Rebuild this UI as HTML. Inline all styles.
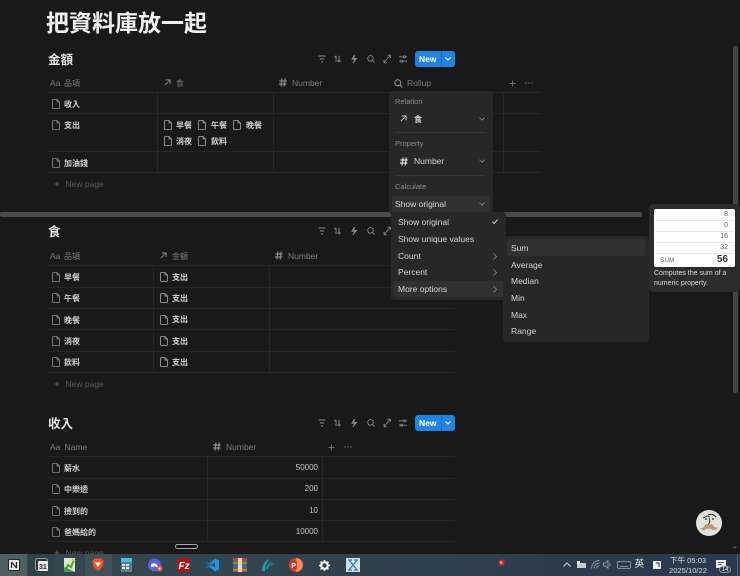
<!DOCTYPE html>
<html lang="zh-Hant"><head><meta charset="utf-8"><title>把資料庫放一起</title>
<style>
html,body{margin:0;padding:0;background:#191919}
#p{position:relative;width:740px;height:576px;overflow:hidden;background:#191919;font-family:"Liberation Sans","Noto Sans CJK TC",sans-serif;color:#d4d4d4;filter:blur(.3px)}
.t{position:absolute;white-space:nowrap;line-height:12px;font-size:8px}
.h{color:#7c7c7c;font-size:8px}
.c{margin-top:1px}
.r{color:#d0d0d0;font-weight:700;font-size:8px;margin-top:1px}
.n{color:#c4c4c4;font-size:8px;text-align:right}
.np{color:#5a5a5a;font-size:8.5px}
.m{color:#d6d6d6;font-size:8.5px}
.l{color:#8c8c8c;font-size:7.5px}
.hl{position:absolute;height:1px;background:#262626}
.vl{position:absolute;width:1px;background:#262626}
.b{position:absolute}
svg{position:absolute;overflow:visible;fill:none}
.btn{position:absolute;width:40px;height:16px;background:#2383e2;border-radius:3px}
.btn i{position:absolute;left:26px;top:0;width:1px;height:16px;background:#1a6cc0}
.btn span{position:absolute;left:4px;top:2px;line-height:12px;font-size:8.5px;font-weight:700;color:#fff}
</style></head><body><div id="p">
<svg width="0" height="0" style="position:absolute"><defs>
<symbol id="doc" viewBox="0 0 8 10" overflow="visible"><path d="M.5 1.2Q.5.5 1.2.5H5L7.5 3V8.8Q7.5 9.5 6.8 9.5H1.2Q.5 9.5.5 8.8ZM5 .5V3H7.5" stroke="#8d8d8d" stroke-width=".8" fill="none"/></symbol>
<symbol id="docw" viewBox="0 0 8 10" overflow="visible"><path d="M.5 1.2Q.5.5 1.2.5H5L7.5 3V8.8Q7.5 9.5 6.8 9.5H1.2Q.5 9.5.5 8.8ZM5 .5V3H7.5" stroke="#a8a8a8" stroke-width=".8" fill="none"/></symbol>
<symbol id="arr" viewBox="0 0 8 8" overflow="visible"><path d="M1 7 7 1M2 1H7V6" stroke="currentColor" stroke-width="1" fill="none"/></symbol>
<symbol id="hash" viewBox="0 0 8 9" overflow="visible"><path d="M3 .5 2 8.5M6.2.5 5.2 8.5M.3 3H7.7M0 6H7.4" stroke="currentColor" stroke-width="1.2" fill="none"/></symbol>
<symbol id="chev" viewBox="0 0 6 4" overflow="visible"><path d="M.5.7 3 3.2 5.5.7" stroke="#8a8a8a" stroke-width=".8" fill="none"/></symbol>
<symbol id="right" viewBox="0 0 4 7" overflow="visible"><path d="M.5.5 3.5 3.5.5 6.5" stroke="#8a8a8a" stroke-width=".8" fill="none"/></symbol>
<symbol id="plus" viewBox="0 0 7 7" overflow="visible"><path d="M3.5.5V6.5M.5 3.5H6.5" stroke="#6c6c6c" stroke-width="1" fill="none"/></symbol>
<symbol id="dots" viewBox="0 0 8 2" overflow="visible"><circle cx="1" cy="1" r=".7" fill="#727272"/><circle cx="4" cy="1" r=".7" fill="#727272"/><circle cx="7" cy="1" r=".7" fill="#727272"/></symbol>
<symbol id="tools" viewBox="0 0 90 10" overflow="visible">
<g stroke="#8a8a8a" stroke-width=".9" fill="none">
<path d="M.5 2H7.5M1.8 5H6.2M3 8H5"/>
<path d="M18 8V1.8M16.400 3.400 18 1.800M21 1.800V8M19.400 6.400 21 8M21 8 22.600 6.400"/>
<path d="M36.500 1 34 5.300H37L35 9 38.500 4.400H35.800Z"/>
<circle cx="52.500" cy="4.400" r="2.800"/><path d="M54.500 6.500 56.700 8.800"/>
<path d="M66 8.500 72 1.500M69.400 1.200H72.300V4M66 6V8.800H68.900"/>
<path d="M81 2.800H89M81 7.200H89"/><circle cx="86.400" cy="2.800" r="1" fill="#191919"/><circle cx="83.600" cy="7.200" r="1" fill="#191919"/>
</g></symbol>
</defs></svg>

<div class="t" style="left:46px;top:8px;font-size:23px;line-height:30px;font-weight:700;color:#f0f0f0">把資料庫放一起</div>

<!-- Table 1 -->
<div class="t" style="left:48px;top:52px;font-size:12.5px;line-height:16px;font-weight:700;color:#e6e6e6">金額</div>
<svg style="left:318px;top:54px" width="90" height="10"><use href="#tools" width="90" height="10"/></svg>
<div class="btn" style="left:415px;top:51px"><span>New</span><i></i><svg style="left:30px;top:6px" width="6" height="4"><path d="M.5.5 3 3 5.5.5" stroke="#fff" stroke-width="1"/></svg></div>

<div class="t h" style="left:50px;top:77px;font-size:8.5px">Aa</div><div class="t h c" style="left:64px;top:77px">品項</div>
<svg style="left:164px;top:79px;color:#909090" width="7" height="7"><use href="#arr" width="7" height="7"/></svg><div class="t h c" style="left:176px;top:77px">食</div>
<svg style="left:279px;top:78px;color:#8a8a8a" width="8" height="9"><use href="#hash" width="8" height="9"/></svg><div class="t h" style="left:292px;top:77px;font-size:8.5px">Number</div>
<svg style="left:394px;top:79px" width="9" height="9"><circle cx="3.8" cy="3.8" r="3" stroke="#a0a0a0"/><path d="M6 6 8.5 8.5" stroke="#a0a0a0"/></svg><div class="t h" style="left:407px;top:77px;font-size:8.5px">Rollup</div>
<svg style="left:509px;top:79.5px" width="7" height="7"><use href="#plus" width="7" height="7"/></svg>
<svg style="left:524.500px;top:82px" width="8" height="2"><use href="#dots" width="8" height="2"/></svg>

<div class="hl" style="left:48px;top:92px;width:493px"></div>
<div class="hl" style="left:48px;top:113px;width:493px"></div>
<div class="hl" style="left:48px;top:151px;width:493px"></div>
<div class="hl" style="left:48px;top:172px;width:493px"></div>
<div class="vl" style="left:157px;top:93px;height:79px"></div>
<div class="vl" style="left:273px;top:93px;height:79px"></div>
<div class="vl" style="left:503px;top:93px;height:79px"></div>

<svg style="left:52px;top:99px" width="8" height="10"><use href="#doc" width="8" height="10"/></svg><div class="t r" style="left:64px;top:98px">收入</div>
<svg style="left:52px;top:120px" width="8" height="10"><use href="#doc" width="8" height="10"/></svg><div class="t r" style="left:64px;top:119px">支出</div>
<svg style="left:52px;top:158px" width="8" height="10"><use href="#doc" width="8" height="10"/></svg><div class="t r" style="left:64px;top:157px">加油錢</div>

<svg style="left:164px;top:120px" width="8" height="10"><use href="#docw" width="8" height="10"/></svg><div class="t r" style="left:176px;top:119px">早餐</div>
<svg style="left:198px;top:120px" width="8" height="10"><use href="#docw" width="8" height="10"/></svg><div class="t r" style="left:211px;top:119px">午餐</div>
<svg style="left:233px;top:120px" width="8" height="10"><use href="#docw" width="8" height="10"/></svg><div class="t r" style="left:246px;top:119px">晚餐</div>
<svg style="left:164px;top:136px" width="8" height="10"><use href="#docw" width="8" height="10"/></svg><div class="t r" style="left:176px;top:135px">消夜</div>
<svg style="left:198px;top:136px" width="8" height="10"><use href="#docw" width="8" height="10"/></svg><div class="t r" style="left:211px;top:135px">飲料</div>

<svg style="left:54px;top:181px" width="6" height="6"><use href="#plus" width="6" height="6"/></svg><div class="t np" style="left:65.5px;top:178px">New page</div>

<!-- scrollbars -->
<div class="b" style="left:0;top:212px;width:642px;height:5px;background:#4b4b4b;border-radius:2px"></div>
<div class="b" style="left:733px;top:46px;width:5px;height:347px;background:#444;border-radius:2px"></div>
<svg style="left:732px;top:546px" width="6" height="4"><path d="M.5.5 3 3 5.5.5Z" fill="#555"/></svg>

<!-- Table 2 -->
<div class="t" style="left:48px;top:224px;font-size:12.5px;line-height:16px;font-weight:700;color:#e6e6e6">食</div>
<svg style="left:318px;top:226px" width="90" height="10"><use href="#tools" width="90" height="10"/></svg>
<div class="t h" style="left:50px;top:250px;font-size:8.5px">Aa</div><div class="t h c" style="left:64px;top:250px">品項</div>
<svg style="left:160px;top:252px;color:#909090" width="7" height="7"><use href="#arr" width="7" height="7"/></svg><div class="t h c" style="left:172px;top:250px">金額</div>
<svg style="left:275px;top:251px;color:#8a8a8a" width="8" height="9"><use href="#hash" width="8" height="9"/></svg><div class="t h" style="left:288px;top:250px;font-size:8.5px">Number</div>

<div class="hl" style="left:48px;top:265px;width:407px"></div>
<div class="hl" style="left:48px;top:287px;width:407px"></div>
<div class="hl" style="left:48px;top:308px;width:407px"></div>
<div class="hl" style="left:48px;top:329px;width:407px"></div>
<div class="hl" style="left:48px;top:351px;width:407px"></div>
<div class="hl" style="left:48px;top:372px;width:407px"></div>
<div class="vl" style="left:153px;top:266px;height:106px"></div>
<div class="vl" style="left:269px;top:266px;height:106px"></div>

<svg style="left:52px;top:272px" width="8" height="10"><use href="#doc" width="8" height="10"/></svg><div class="t r" style="left:64px;top:271px">早餐</div>
<svg style="left:160px;top:272px" width="8" height="10"><use href="#docw" width="8" height="10"/></svg><div class="t r" style="left:172px;top:270.5px">支出</div>
<svg style="left:52px;top:293px" width="8" height="10"><use href="#doc" width="8" height="10"/></svg><div class="t r" style="left:64px;top:292px">午餐</div>
<svg style="left:160px;top:293px" width="8" height="10"><use href="#docw" width="8" height="10"/></svg><div class="t r" style="left:172px;top:292px">支出</div>
<svg style="left:52px;top:315px" width="8" height="10"><use href="#doc" width="8" height="10"/></svg><div class="t r" style="left:64px;top:314px">晚餐</div>
<svg style="left:160px;top:315px" width="8" height="10"><use href="#docw" width="8" height="10"/></svg><div class="t r" style="left:172px;top:313px">支出</div>
<svg style="left:52px;top:336px" width="8" height="10"><use href="#doc" width="8" height="10"/></svg><div class="t r" style="left:64px;top:335px">消夜</div>
<svg style="left:160px;top:336px" width="8" height="10"><use href="#docw" width="8" height="10"/></svg><div class="t r" style="left:172px;top:335px">支出</div>
<svg style="left:52px;top:357px" width="8" height="10"><use href="#doc" width="8" height="10"/></svg><div class="t r" style="left:64px;top:356px">飲料</div>
<svg style="left:160px;top:357px" width="8" height="10"><use href="#docw" width="8" height="10"/></svg><div class="t r" style="left:172px;top:356px">支出</div>
<svg style="left:54px;top:381px" width="6" height="6"><use href="#plus" width="6" height="6"/></svg><div class="t np" style="left:65.5px;top:378px">New page</div>

<!-- Table 3 -->
<div class="t" style="left:48px;top:416px;font-size:12.5px;line-height:16px;font-weight:700;color:#e6e6e6">收入</div>
<svg style="left:318px;top:418px" width="90" height="10"><use href="#tools" width="90" height="10"/></svg>
<div class="btn" style="left:415px;top:415px"><span>New</span><i></i><svg style="left:30px;top:6px" width="6" height="4"><path d="M.5.5 3 3 5.5.5" stroke="#fff" stroke-width="1"/></svg></div>
<div class="t h" style="left:50px;top:441px;font-size:8.5px">Aa</div><div class="t h" style="left:64.5px;top:441px;font-size:8.5px">Name</div>
<svg style="left:213px;top:442px;color:#8a8a8a" width="8" height="9"><use href="#hash" width="8" height="9"/></svg><div class="t h" style="left:226px;top:441px;font-size:8.5px">Number</div>
<svg style="left:328px;top:443.5px" width="7" height="7"><use href="#plus" width="7" height="7"/></svg>
<svg style="left:343.500px;top:446px" width="8" height="2"><use href="#dots" width="8" height="2"/></svg>
<div class="hl" style="left:48px;top:456px;width:407px"></div>
<div class="hl" style="left:48px;top:478px;width:407px"></div>
<div class="hl" style="left:48px;top:499px;width:407px"></div>
<div class="hl" style="left:48px;top:520px;width:407px"></div>
<div class="hl" style="left:48px;top:541px;width:407px"></div>
<div class="vl" style="left:207px;top:457px;height:84px"></div>
<div class="vl" style="left:322px;top:457px;height:84px"></div>
<svg style="left:52px;top:463px" width="8" height="10"><use href="#doc" width="8" height="10"/></svg><div class="t r" style="left:64px;top:462px">薪水</div><div class="t n" style="right:422px;top:462px">50000</div>
<svg style="left:52px;top:484px" width="8" height="10"><use href="#doc" width="8" height="10"/></svg><div class="t r" style="left:64px;top:483px">中樂透</div><div class="t n" style="right:422px;top:483px">200</div>
<svg style="left:52px;top:506px" width="8" height="10"><use href="#doc" width="8" height="10"/></svg><div class="t r" style="left:64px;top:505px">撿到的</div><div class="t n" style="right:422px;top:505px">10</div>
<svg style="left:52px;top:527px" width="8" height="10"><use href="#doc" width="8" height="10"/></svg><div class="t r" style="left:64px;top:526px">爸媽給的</div><div class="t n" style="right:422px;top:526px">10000</div>
<svg style="left:54px;top:550px" width="6" height="6"><use href="#plus" width="6" height="6"/></svg><div class="t np" style="left:65.5px;top:547px">New page</div>
<div class="b" style="left:175px;top:544px;width:21px;height:3px;background:#111;border:1px solid #a8a8a8;border-radius:3px"></div>

<!-- Menu 1 -->
<div class="b" style="left:389px;top:91px;width:104px;height:123px;background:#272727;border-radius:3px"></div>
<div class="t l" style="left:395px;top:96px">Relation</div>
<svg style="left:400px;top:115px;color:#dcdcdc" width="7" height="7"><use href="#arr" width="7" height="7"/></svg><div class="t m c" style="left:414px;top:113px;font-weight:700;font-size:8px">食</div>
<svg style="left:479px;top:117px" width="6" height="4"><use href="#chev" width="6" height="4"/></svg>
<div class="hl" style="left:396px;top:132px;width:89px;background:#363636"></div>
<div class="t l" style="left:395px;top:138px">Property</div>
<svg style="left:400px;top:157px;color:#dcdcdc" width="8" height="9"><use href="#hash" width="8" height="9"/></svg><div class="t m" style="left:414px;top:155px">Number</div>
<svg style="left:479px;top:159px" width="6" height="4"><use href="#chev" width="6" height="4"/></svg>
<div class="hl" style="left:396px;top:175px;width:89px;background:#363636"></div>
<div class="t l" style="left:395px;top:181px">Calculate</div>
<div class="b" style="left:392px;top:196px;width:98px;height:16px;background:#313131;border-radius:3px"></div>
<div class="t m" style="left:395px;top:198px">Show original</div>
<svg style="left:479px;top:202px" width="6" height="4"><use href="#chev" width="6" height="4"/></svg>

<!-- Menu 2 -->
<div class="b" style="left:391px;top:212px;width:115px;height:88px;background:#272727;border-radius:3px"></div>
<div class="b" style="left:393px;top:281px;width:111px;height:16px;background:#313131;border-radius:3px"></div>
<div class="t m" style="left:398px;top:216px">Show original</div>
<svg style="left:492px;top:219px" width="6" height="5"><path d="M.4 2.6 2.2 4.4 5.6.4" stroke="#cfcfcf"/></svg>
<div class="t m" style="left:398px;top:233px">Show unique values</div>
<div class="t m" style="left:398px;top:250px">Count</div><svg style="left:493px;top:252.5px" width="4" height="7"><use href="#right" width="4" height="7"/></svg>
<div class="t m" style="left:398px;top:266px">Percent</div><svg style="left:493px;top:269px" width="4" height="7"><use href="#right" width="4" height="7"/></svg>
<div class="t m" style="left:398px;top:283px">More options</div><svg style="left:493px;top:286px" width="4" height="7"><use href="#right" width="4" height="7"/></svg>

<!-- Menu 3 -->
<div class="b" style="left:503px;top:236px;width:146px;height:106px;background:#272727;border-radius:4px"></div>
<div class="b" style="left:507px;top:239px;width:138px;height:17px;background:#313131;border-radius:3px"></div>
<div class="t m" style="left:511px;top:242px">Sum</div>
<div class="t m" style="left:511px;top:259px">Average</div>
<div class="t m" style="left:511px;top:275px">Median</div>
<div class="t m" style="left:511px;top:292px">Min</div>
<div class="t m" style="left:511px;top:309px">Max</div>
<div class="t m" style="left:511px;top:325px">Range</div>

<!-- Tooltip -->
<div class="b" style="left:649px;top:204px;width:91px;height:88px;background:#2c2c2c;border-radius:4px"></div>
<div class="b" style="left:654px;top:209px;width:81px;height:58px;background:#fff;border-radius:2px"></div>
<div class="hl" style="left:655px;top:220px;width:79px;background:#e8e8e8"></div>
<div class="hl" style="left:655px;top:231px;width:79px;background:#e8e8e8"></div>
<div class="hl" style="left:655px;top:242px;width:79px;background:#e8e8e8"></div>
<div class="hl" style="left:655px;top:253px;width:79px;background:#e8e8e8"></div>
<div class="t" style="right:12px;top:209px;font-size:7px;color:#666">8</div>
<div class="t" style="right:12px;top:220px;font-size:7px;color:#666">0</div>
<div class="t" style="right:12px;top:231px;font-size:7px;color:#666">16</div>
<div class="t" style="right:12px;top:242px;font-size:7px;color:#666">32</div>
<div class="t" style="left:660px;top:255px;font-size:6.5px;color:#666">SUM</div>
<div class="t" style="right:12px;top:254px;font-size:10px;font-weight:700;color:#333">56</div>
<div class="t" style="left:654px;top:268px;font-size:7px;color:#dcdcdc">Computes the sum of a</div>
<div class="t" style="left:654px;top:278px;font-size:7px;color:#dcdcdc">numeric property.</div>

<!-- Bubble -->
<div class="b" style="left:696px;top:510px;width:26px;height:26px;background:#e4e2df;border-radius:50%"></div>
<svg style="left:696px;top:510px" width="26" height="26"><path d="M7 8Q11 5 14 7M12 5Q17 3 20 7M13 8Q15 12 12 15" stroke="#333" stroke-width="1"/><circle cx="10" cy="9" r=".9" fill="#222"/><circle cx="17" cy="9" r=".9" fill="#222"/><path d="M4 18Q7 19 9 15Q12 13 13 15Q15 13 17 15Q19 19 22 17Q20 22 15 19Q12 18 10 19Q7 22 4 18Z" fill="#c09a78"/></svg>

<!-- Taskbar -->
<div class="b" style="left:0;top:554px;width:740px;height:22px;background:linear-gradient(90deg,#344850,#33454f 30%,#2d3d4d 70%,#2a394c)"></div>
<div class="b" style="left:0;top:554px;width:27px;height:22px;background:#4e6062"></div>
<div class="b" style="left:28px;top:554px;width:27px;height:22px;background:#2f4149"></div>
<div class="b" style="left:85px;top:554px;width:27px;height:22px;background:#3f5259"></div>

<svg style="left:8px;top:559px" width="12" height="12"><rect x=".5" y=".5" width="11" height="11" rx="1" fill="#e8e8e8" stroke="#222"/><path d="M3.5 3V9M3.5 3 8.5 9M8.5 3V9" stroke="#222" stroke-width="1.2"/></svg>
<svg style="left:35px;top:558px" width="14" height="14"><rect x=".5" y=".5" width="12" height="12" rx="2" fill="#333" stroke="#999"/><rect x="3" y="3" width="10" height="10" rx="1" fill="#e8e8e8"/><text x="4" y="11" font-size="7" font-weight="700" fill="#222" font-family="Liberation Sans">31</text></svg>
<svg style="left:64px;top:558px" width="12" height="14"><rect width="11" height="14" fill="#e2e6c8"/><path d="M1 13 4 7 7 9 10 2" stroke="#4aa83c" stroke-width="2"/><path d="M0 14V9L5 11 11 14Z" fill="#3f9c4c"/><path d="M8 1 11 3" stroke="#e8c23c" stroke-width="2"/></svg>
<svg style="left:92px;top:558px" width="12" height="14"><path d="M2.5.5H9.5L11.5 3 11 8 6 13.5 1 8 .5 3Z" fill="#f0512a"/><path d="M3 4.5H9L6 9Z" fill="#fff"/></svg>
<svg style="left:121px;top:558px" width="11" height="14"><rect width="11" height="14" fill="#5d7f8c"/><rect y="0" width="11" height="4" fill="#46c0d8"/><path d="M1 6H4V8H1ZM1 9H4V11H1ZM5 6H8V8H5ZM5 9H8V11H5Z" fill="#d6e2e6"/></svg>
<svg style="left:148px;top:558px" width="15" height="14"><circle cx="6.500" cy="7" r="6.500" fill="#5b5fe0"/><path d="M3 6.500Q6 4 9 6.500L10 9H8L6.500 8 5 9H3Z" fill="#fff"/><circle cx="11.500" cy="10.500" r="3" fill="#e8584a"/><circle cx="11.500" cy="10.500" r="1" fill="#fff"/></svg>
<svg style="left:177px;top:558px" width="13" height="14"><rect width="13" height="14" fill="#a81818"/><text x="1.500" y="11" font-size="10" font-style="italic" font-weight="700" fill="#fff" font-family="Liberation Sans">Fz</text></svg>
<svg style="left:205px;top:558px" width="14" height="14"><path d="M10 .5 14 2.500V11.500L10 13.500 2.500 7.500ZM10 4.500 5.500 7 10 9.500Z" fill="#2491e0"/><path d="M0 4.500 2 3.500 6 7 2 10.500 0 9.500 3 7Z" fill="#0d6bbd"/></svg>
<svg style="left:233px;top:558px" width="14" height="14"><rect width="14" height="3" y="0" fill="#c23a56"/><rect width="14" height="3" y="3.500" fill="#5ba04a"/><rect width="14" height="3" y="7" fill="#5a58a8"/><rect width="14" height="3" y="10.500" fill="#c87a30"/><rect x="5" y="0" width="4" height="14" fill="#e8d8b0"/></svg>
<svg style="left:261px;top:558px" width="14" height="14"><path d="M1 13Q1 3 9 1 5 4 4 13ZM5 12Q6 5 12 3 8 6 7.500 10ZM9 8Q10 5 14 5 11 6 10.500 8Z" fill="#1e9aa8"/></svg>
<svg style="left:289px;top:558px" width="14" height="14"><path d="M7 0A7 7 0 1 1 7 14Z" fill="#f28a5c"/><path d="M7 0A7 7 0 0 0 7 14Z" fill="#d8402a"/><rect x="1" y="3" width="7" height="8" fill="#c83a24"/><text x="2.300" y="9.800" font-size="7" font-weight="700" fill="#fff" font-family="Liberation Sans">P</text></svg>
<svg style="left:319px;top:560px" width="11" height="11"><circle cx="5.500" cy="5.500" r="3.300" stroke="#f2f2f2" stroke-width="2.200"/><path d="M5.500 0V2M5.500 9V11M0 5.500H2M9 5.500H11M1.600 1.600 3 3M8 8 9.400 9.400M1.600 9.400 3 8M8 3 9.400 1.600" stroke="#f2f2f2" stroke-width="1.600"/></svg>
<svg style="left:346px;top:558px" width="14" height="14"><rect width="14" height="14" fill="#cfe0ea"/><path d="M3 2 11 12M11 2 3 12M2 2H6M8 2H12M2 12H6M8 12H12" stroke="#2f7eb8" stroke-width="1.300"/></svg>

<svg style="left:498px;top:559px" width="7" height="7"><circle cx="3.500" cy="3.500" r="3.300" fill="#c4282a"/></svg>
<div class="t" style="left:500px;top:556.5px;font-size:4.5px;color:#fff">5</div>
<svg style="left:563px;top:562px" width="8" height="5"><path d="M.5 4.500 4 1 7.500 4.500" stroke="#d8d8d8"/></svg>
<svg style="left:577px;top:561px" width="9" height="7"><rect x="0" y="2" width="9" height="5" fill="#c6ccd0"/><rect width="3" height="3" fill="#dfe3e5"/></svg>
<svg style="left:591px;top:560px" width="9" height="9"><path d="M.5 8.500A8 8 0 0 1 8.500.5M3 8.500A5.500 5.500 0 0 1 8.500 3M5.500 8.500A3 3 0 0 1 8.500 5.500" stroke="#8d969c" stroke-width=".9"/></svg>
<svg style="left:603px;top:560px" width="9" height="9"><path d="M.5 3H2.500L5 .8V8.200L2.500 6H.5Z" stroke="#a8adb2" stroke-width=".8"/><path d="M6.500 2.800Q8 4.500 6.500 6.200" stroke="#8d969c" stroke-width=".8"/></svg>
<svg style="left:617px;top:561px" width="14" height="8"><rect x=".5" y=".5" width="13" height="7" rx="1" stroke="#a0a6ac" stroke-width=".8"/><path d="M3 5.500H11" stroke="#8d969c"/></svg>
<div class="t" style="left:634.5px;top:558.5px;font-size:9.5px;color:#eef0f2">英</div>
<svg style="left:653px;top:561px" width="8" height="8"><rect width="8" height="8" fill="#f0f0f0"/><path d="M3 2H6V6" stroke="#222"/></svg>
<div class="t" style="left:668px;top:554.5px;width:40px;text-align:center;font-size:7.6px;color:#d8dce0">下午 05:03</div>
<div class="t" style="left:668px;top:564.5px;width:40px;text-align:center;font-size:7.6px;color:#d8dce0">2025/10/22</div>
<svg style="left:716px;top:560px" width="13" height="12"><path d="M.5.500H9.500V7.500H.5Z" fill="#e6e8ea" stroke="#e6e8ea"/><path d="M2 2.500H8M2 4.500H6" stroke="#333" stroke-width=".7"/></svg>
<div class="b" style="left:719px;top:566px;width:12px;height:7px;background:#2c3b4c;border:1px solid #8d969c;border-radius:4px;box-sizing:border-box"></div>
<div class="t" style="left:721.5px;top:563.5px;font-size:6.5px;color:#e6e8ea">14</div>
<div class="b" style="left:737px;top:554px;width:1px;height:22px;background:#5d6a78"></div>
</div></body></html>
